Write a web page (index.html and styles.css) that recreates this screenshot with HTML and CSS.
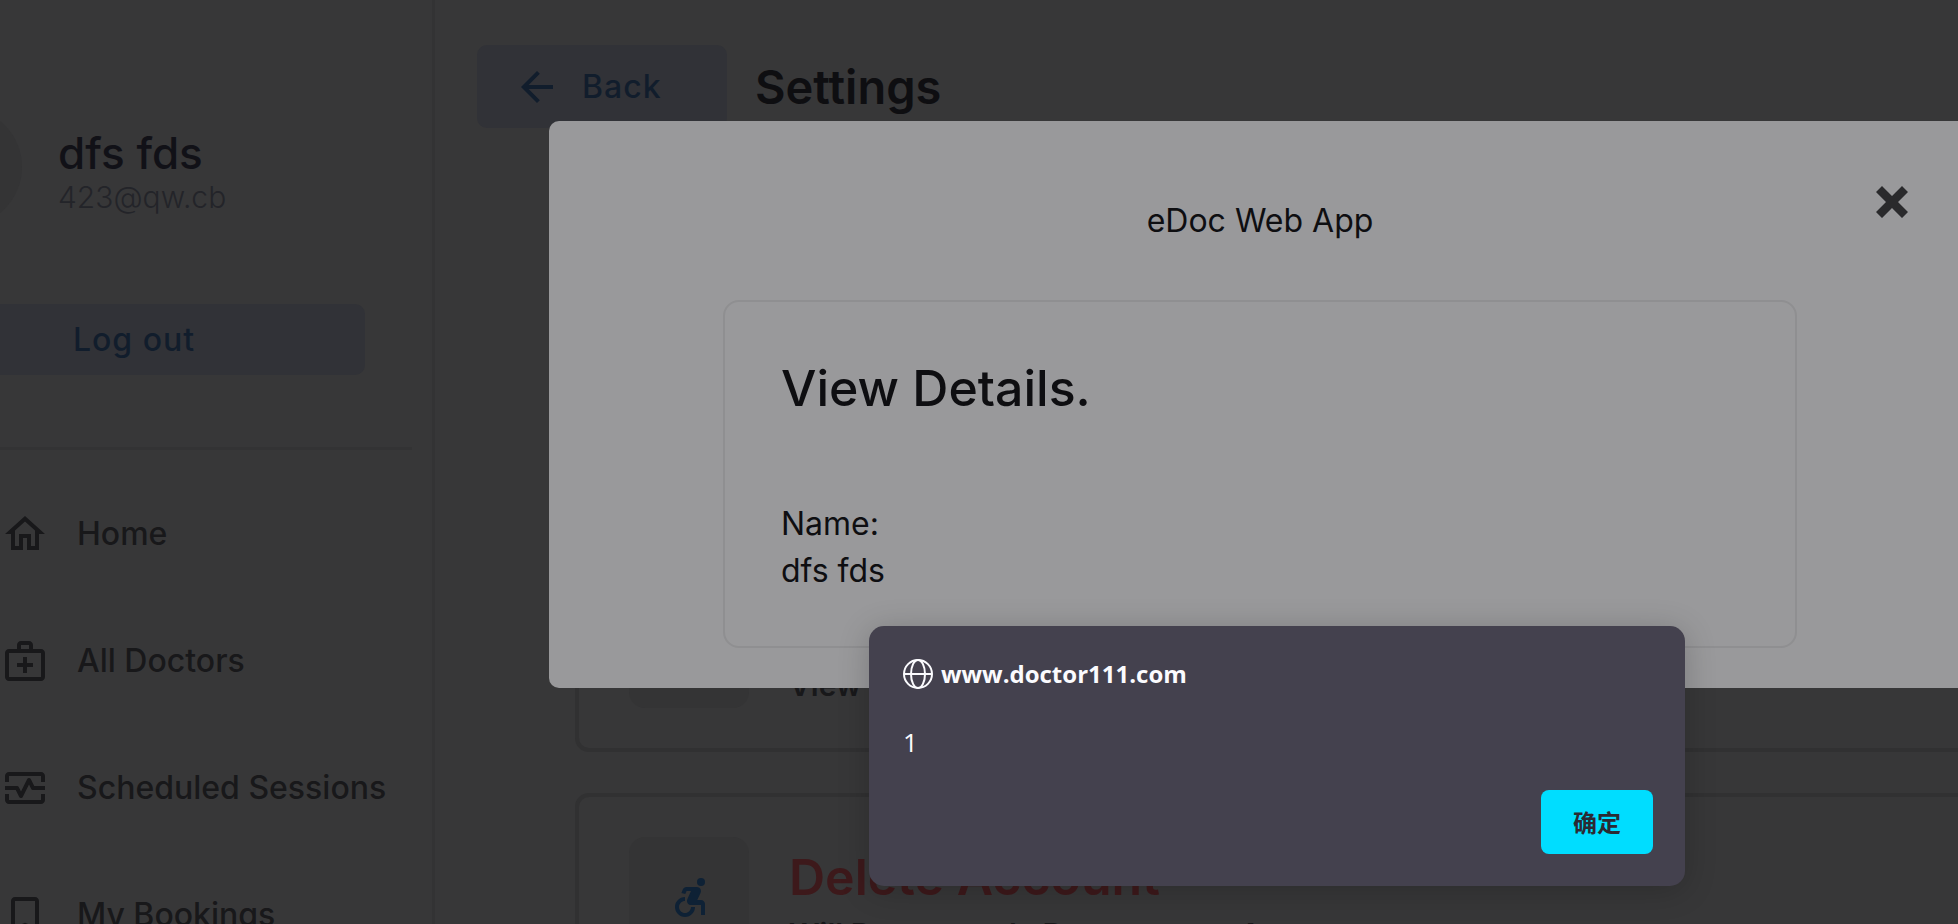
FILE: index.html
```html
<!DOCTYPE html>
<html lang="en">
<head>
<meta charset="utf-8">
<title>Settings</title>
<link rel="stylesheet" href="styles.css">
</head>
<body>
<div class="page">
  <aside class="sidebar">
    <div class="profile">
      <div class="avatar"></div>
      <div class="profile-text">
        <p class="profile-name">dfs fds</p>
        <p class="profile-mail">423@qw.cb</p>
      </div>
    </div>
    <button class="soft-btn logout" type="button">Log out</button>
    <nav class="menu">
      <a class="menu-item" href="#home">
        <svg class="icon" viewBox="0 0 24 24"><path d="M12 5.69l5 4.5V18h-2v-6H9v6H7v-7.81l5-4.5M12 3L2 12h3v8h6v-6h2v6h6v-8h3L12 3z"/></svg>
        <span>Home</span>
      </a>
      <a class="menu-item" href="#doctors">
        <svg class="icon" viewBox="0 0 24 24"><path d="M20 6h-4V4c0-1.100-.9-2-2-2h-4c-1.100 0-2 .9-2 2v2H4c-1.100 0-2 .9-2 2v12c0 1.100.9 2 2 2h16c1.100 0 2-.9 2-2V8c0-1.100-.9-2-2-2zM10 4h4v2h-4V4zm10 16H4V8h16v12z"/><path d="M13 10h-2v3H8v2h3v3h2v-3h3v-2h-3z"/></svg>
        <span>All Doctors</span>
      </a>
      <a class="menu-item" href="#sessions">
        <svg class="icon" viewBox="0 0 24 24"><path d="M20 4H4c-1.100 0-2 .9-2 2v3h2V6h16v3h2V6c0-1.100-.9-2-2-2zm0 14H4v-3H2v3c0 1.100.9 2 2 2h16c1.100 0 2-.9 2-2v-3h-2v3z"/><path d="M14.890 7.550c-.34-.68-1.450-.68-1.790 0L10 13.760l-1.110-2.210A.988.988 0 0 0 8 11H2v2h5.380l1.720 3.450c.18.340.52.550.9.550s.72-.21.890-.55L14 10.240l1.110 2.210c.17.340.51.550.89.550h6v-2h-5.380l-1.730-3.450z"/></svg>
        <span>Scheduled Sessions</span>
      </a>
      <a class="menu-item" href="#bookings">
        <svg class="icon" viewBox="0 0 24 24"><path d="M17 3H7c-1.100 0-2 .9-2 2v16l7-3 7 3V5c0-1.100-.9-2-2-2zm0 15l-5-2.180L7 18V5h10v13z"/></svg>
        <span>My Bookings</span>
      </a>
    </nav>
  </aside>

  <main class="main">
    <header class="topbar">
      <button class="soft-btn back" type="button">
        <svg class="icon" viewBox="0 0 24 24"><path d="M20 11H7.830l5.590-5.590L12 4l-8 8 8 8 1.410-1.410L7.830 13H20v-2z"/></svg>
        <span>Back</span>
      </button>
      <h1 class="page-title">Settings</h1>
    </header>
    <section class="cards">
      <article class="card">
        <div class="card-icon"></div>
        <div class="card-body">
          <h2 class="card-title">View Account Details</h2>
          <p class="card-text">View Personal information About Your Account</p>
        </div>
      </article>
      <article class="card">
        <div class="card-icon">
          <svg class="icon" viewBox="0 0 24 24"><circle cx="18" cy="4.540" r="2"/><path d="M15 17h-2c0 1.650-1.350 3-3 3s-3-1.350-3-3 1.350-3 3-3v-2c-2.760 0-5 2.240-5 5s2.240 5 5 5 5-2.240 5-5zm3-3.500h-1.860l1.670-3.670C18.420 8.500 17.440 7 15.960 7h-5.200c-.81 0-1.540.47-1.870 1.200L8.220 10l1.920.53.65-1.530H13l-1.830 4.100c-.6 1.330.39 2.900 1.850 2.900H18v5h2v-5.500c0-1.100-.9-2-2-2z"/></svg>
        </div>
        <div class="card-body">
          <h2 class="card-title danger">Delete Account</h2>
          <p class="card-text">Will Permanently Remove your Account</p>
        </div>
      </article>
    </section>
  </main>
</div>

<div class="overlay">
  <section class="modal" role="dialog" aria-label="View Details">
    <button class="close" type="button" aria-label="Close">
      <svg class="close-icon" viewBox="0 0 32 32"><path d="M0 6L6 0l10 10L26 0l6 6-10 10 10 10-6 6-10-10L6 32l-6-6 10-10z"/></svg>
    </button>
    <p class="modal-head">eDoc Web App</p>
    <div class="details">
      <h2 class="details-title">View Details.</h2>
      <dl class="fields">
        <dt>Name:</dt>
        <dd>dfs fds</dd>
      </dl>
    </div>
  </section>
</div>

<section class="alert" role="alertdialog" aria-label="www.doctor111.com">
  <div class="alert-head">
    <svg class="globe" viewBox="0 0 30 30"><circle cx="15" cy="15" r="14"/><ellipse cx="15" cy="15" rx="7" ry="14"/><path d="M1 15h28"/></svg>
    <strong>www.doctor111.com</strong>
  </div>
  <p class="alert-text">1</p>
  <button class="ok" type="button" lang="zh-CN">确定</button>
</section>
</body>
</html>
```
FILE: styles.css
```css
* { box-sizing: border-box; }

body {
  margin: 0;
  height: 100vh;
  overflow: hidden;
  position: relative;
  background: #373738;
  color: #0e0e11;
  font-family: Inter, "Liberation Sans", sans-serif;
  font-size: 32px;
  line-height: 47px;
}

h1, h2, p, dl, dd { margin: 0; }

button {
  border: 0;
  padding: 0;
  font: inherit;
  color: inherit;
}

.icon {
  width: 48px;
  height: 48px;
  flex: none;
  fill: currentColor;
}

.page {
  display: flex;
  height: 100vh;
  overflow: hidden;
}

.sidebar {
  flex: none;
  width: 435px;
  border-right: 3px solid #333334;
  padding-top: 108px;
}

.profile {
  display: flex;
  align-items: center;
  gap: 36px;
  margin-left: -96px;
}

.avatar {
  width: 118px;
  height: 118px;
  border-radius: 50%;
  background: #343435;
}

.profile-text { padding-top: 10px; }

.profile-name {
  font-size: 44px;
  font-weight: 500;
  line-height: 50px;
  color: #111117;
}

.profile-mail {
  font-weight: 300;
  font-size: 30px;
  line-height: 38px;
  color: #232429;
}

.soft-btn {
  border-radius: 10px;
  background: #313237;
  color: #111d2c;
  font-weight: 500;
  letter-spacing: 1px;
}

.logout {
  display: block;
  width: 462px;
  height: 71px;
  margin: 78px 0 72px -97px;
}

.menu {
  margin-right: 20px;
  border-top: 3px solid #333334;
  padding-top: 20px;
}

.menu-item {
  display: flex;
  align-items: center;
  gap: 28px;
  height: 127px;
  padding-left: 1px;
  color: #18181a;
  font-weight: 500;
  text-decoration: none;
  white-space: nowrap;
}

.main {
  flex: 1;
  min-width: 0;
  padding: 45px 0 0 42px;
}

.topbar {
  display: flex;
  align-items: center;
  gap: 28px;
}

.back {
  display: flex;
  align-items: center;
  gap: 21px;
  width: 250px;
  height: 83px;
  padding-left: 36px;
}

.page-title {
  font-size: 47px;
  font-weight: 600;
}

.cards {
  display: grid;
  gap: 41px;
  margin: 416px -40px 0 98px;
}

.card {
  display: flex;
  align-items: center;
  gap: 40px;
  height: 208px;
  padding: 0 50px;
  border: 4px solid #313132;
  border-radius: 14px;
  white-space: nowrap;
}

.card-icon {
  display: grid;
  place-items: center;
  width: 120px;
  height: 120px;
  border-radius: 16px;
  background: #343435;
  color: #0e2135;
}

.card-body { padding-top: 10px; }

.card-title {
  font-size: 50px;
  font-weight: 600;
  line-height: 60px;
  margin-bottom: 4px;
  color: #0e2135;
}

.card-title.danger { color: #3d191b; }

.card-text {
  font-size: 30px;
  font-weight: 600;
  color: #18181a;
}

.overlay {
  position: absolute;
  inset: 0;
  padding: 121px 0 0 549px;
}

.modal {
  position: relative;
  margin-right: -13px;
  padding: 76px 174px 40px;
  border-radius: 10px;
  background: #99999b;
}

.modal-head {
  text-align: center;
  margin-bottom: 56px;
}

.close {
  position: absolute;
  top: 65px;
  right: 63px;
  display: grid;
  background: none;
}

.close-icon {
  width: 32px;
  height: 32px;
  fill: #2a2a2c;
}

.details {
  height: 348px;
  padding: 56px;
  border: 2px solid #8f8f91;
  border-radius: 16px;
}

.details-title {
  font-size: 50px;
  font-weight: 500;
  line-height: 60px;
  margin-bottom: 82px;
}

.alert {
  position: absolute;
  left: 869px;
  top: 626px;
  display: flex;
  flex-direction: column;
  width: 816px;
  height: 260px;
  padding: 32px 32px 32px 34px;
  border-radius: 15px;
  background: #44414e;
  box-shadow: 0 4px 32px rgba(0, 0, 0, 0.2);
  color: #fbfbfe;
  font-family: "Open Sans", "Noto Sans CJK SC", sans-serif;
  font-size: 26px;
  line-height: 32px;
}

.alert-head {
  display: flex;
  align-items: center;
  gap: 8px;
  font-size: 24px;
}

.globe {
  width: 30px;
  height: 30px;
  fill: none;
  stroke: currentColor;
  stroke-width: 2;
}

.alert-text { margin-top: 36px; }

.ok {
  align-self: flex-end;
  margin-top: auto;
  width: 112px;
  height: 64px;
  border-radius: 8px;
  background: #00ddff;
  color: #2b2a33;
  font-family: "Noto Sans CJK SC", sans-serif;
  font-size: 24px;
  font-weight: 700;
}
```
